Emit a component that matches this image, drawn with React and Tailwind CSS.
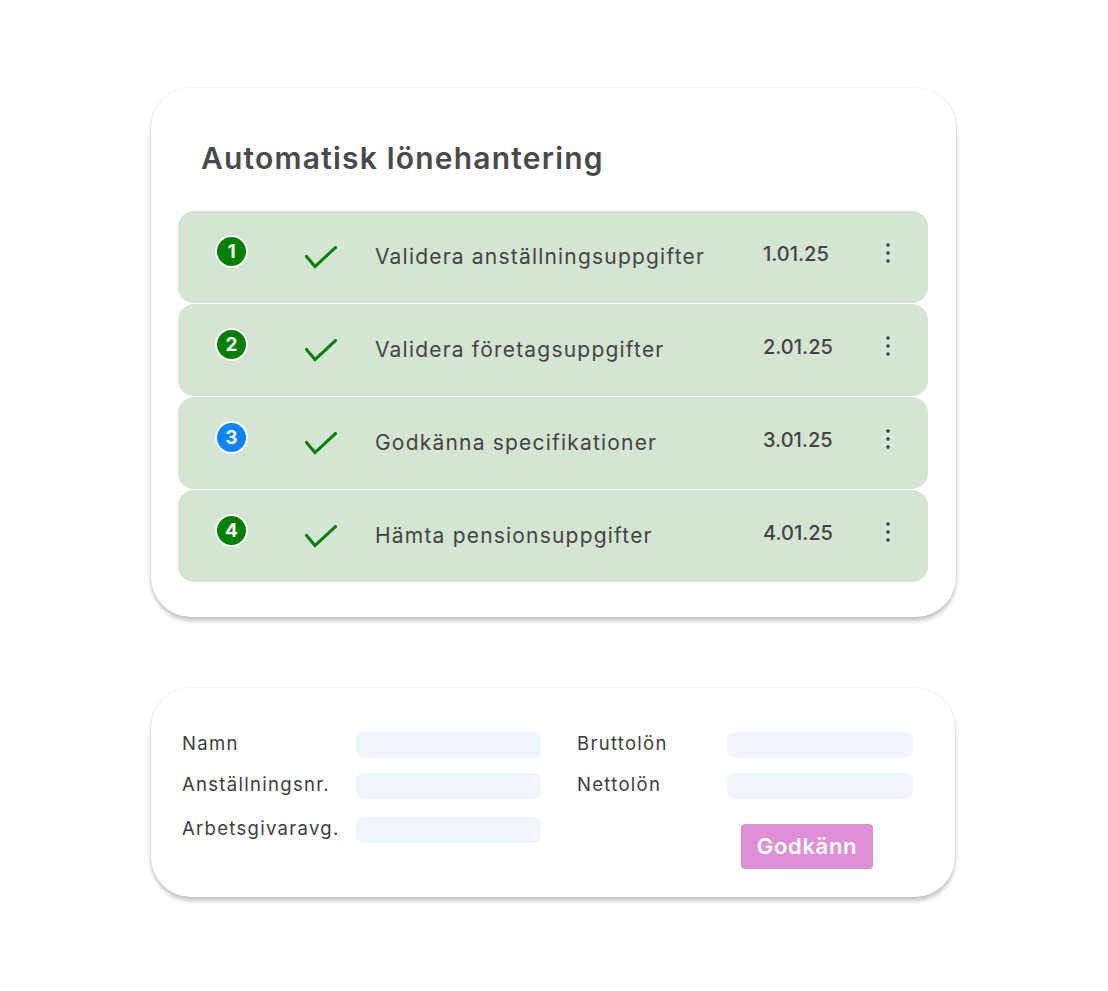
import { memo } from "react";

const steps = [
  { n: 1, label: "Validera anställningsuppgifter", date: "1.01.25", color: "bg-[#008000]" },
  { n: 2, label: "Validera företagsuppgifter", date: "2.01.25", color: "bg-[#008000]" },
  { n: 3, label: "Godkänna specifikationer", date: "3.01.25", color: "bg-[#0a84ff]" },
  { n: 4, label: "Hämta pensionsuppgifter", date: "4.01.25", color: "bg-[#008000]" },
];

function Check() {
  return (
    <svg width="32" height="24" viewBox="0 0 32 24" fill="none">
      <path d="M1.5 10.5 L10 20.5 L30.5 1.5" stroke="#0b7d0b" strokeWidth="3" strokeLinecap="square" />
    </svg>
  );
}

function Dots() {
  return (
    <svg width="6" height="22" viewBox="0 0 6 22">
      <circle cx="3" cy="3" r="1.7" fill="#333" />
      <circle cx="3" cy="11" r="1.7" fill="#333" />
      <circle cx="3" cy="19" r="1.7" fill="#333" />
    </svg>
  );
}

const StepRow = memo(function StepRow({ step }) {
  return (
    <div className="h-[92px] rounded-[16px] bg-[#d4e5d3] flex items-center">
      <div className="ml-[37px] -mt-[12px]">
        <div
          className={`h-[33px] w-[33px] rounded-full border-2 border-white ${step.color} flex items-center justify-center text-white text-[19px] font-bold leading-none`}
        >
          {step.n}
        </div>
      </div>
      <div className="ml-[57px] mt-[2px] flex items-center">
        <Check />
      </div>
      <div className="ml-[38px] flex-1 text-[21px] text-[#444] tracking-[0.057em]">{step.label}</div>
      <div className="w-[122px] text-[20px] font-medium text-[#444] -mt-[6px]">{step.date}</div>
      <div className="mr-[37px] -mt-[8px]">
        <Dots />
      </div>
    </div>
  );
});

const labelCls = "text-[18.5px] text-[#3d3d3d] tracking-[0.07em] leading-[26px] -mt-[2px]";

function Field({ label }) {
  return (
    <>
      <div className={labelCls}>{label}</div>
      <div className="h-[26px] rounded-[8px] bg-[#eff4fd]" />
    </>
  );
}

export default function App() {
  return (
    <div
      className="min-h-[991px] w-full bg-white flex flex-col pt-[88px] pl-[151px]"
      style={{ fontFamily: "Inter, 'Noto Sans', sans-serif" }}
    >
      {/* Payroll steps card */}
      <div className="w-[805px] rounded-[40px] bg-white shadow-[0_0_0_1px_rgba(0,0,0,0.04),0_4px_4px_rgba(0,0,0,0.22)] pt-[50px] pb-[35px] px-[27px]">
        <h1 className="ml-[23px] text-[30px] font-semibold text-[#4a4a4a] leading-[40px] tracking-[0.04em]">
          Automatisk lönehantering
        </h1>
        <div className="mt-[33px] flex flex-col gap-[1px] w-[750px]">
          {steps.map((s) => (
            <StepRow key={s.n} step={s} />
          ))}
        </div>
      </div>

      {/* Employee form card */}
      <div className="mt-[71px] w-[804px] rounded-[40px] bg-white shadow-[0_0_0_1px_rgba(0,0,0,0.04),0_4px_4px_rgba(0,0,0,0.22)] pt-[44px] pb-[28px] pl-[31px]">
        <div className="grid grid-cols-[174px_185px_36px_150px_186px] gap-y-[15px] items-start">
          <Field label="Namn" />
          <div />
          <Field label="Bruttolön" />
          <Field label="Anställningsnr." />
          <div />
          <Field label="Nettolön" />
          <div className="mt-[3px]">
            <div className={labelCls}>Arbetsgivaravg.</div>
          </div>
          <div className="mt-[3px] h-[26px] rounded-[8px] bg-[#eff4fd]" />
          <div />
          <div />
          <div className="mt-[10px] ml-[14px]">
            <button
              type="button"
              className="h-[45px] w-[132px] rounded-[4px] bg-[#df8fd6] text-white text-[22px] font-semibold tracking-[0.03em]"
            >
              Godkänn
            </button>
          </div>
        </div>
      </div>
    </div>
  );
}
